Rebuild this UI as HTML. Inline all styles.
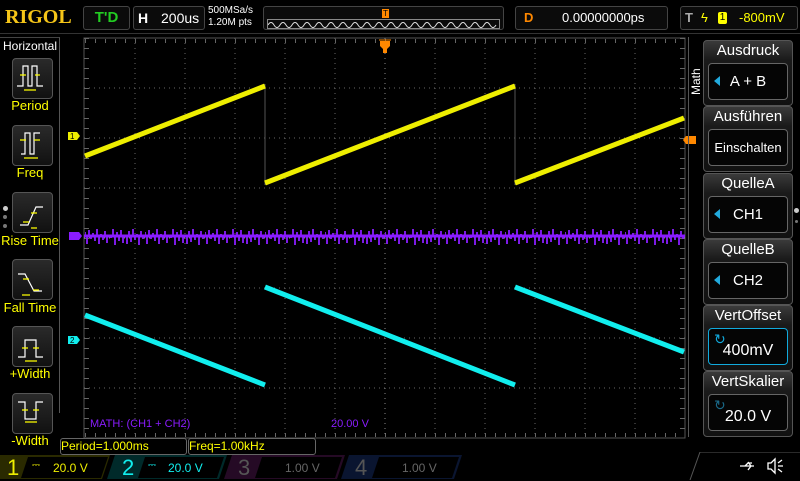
<!DOCTYPE html>
<html><head><meta charset="utf-8"><style>
body{margin:0;background:#000;width:800px;height:480px;overflow:hidden;position:relative;font-family:"Liberation Sans",sans-serif;color:#fff}
.abs{position:absolute}
.box{position:absolute;border:1px solid #444;border-radius:3px;background:#0b0b0b}
.lbtn{position:absolute;left:12px;width:39px;height:39px;border:1px solid #555;border-radius:4px;background:linear-gradient(#2a2a2a,#111)}
.llab{position:absolute;left:0;width:60px;text-align:center;color:#ff0;font-size:13px}
.rb{position:absolute;left:703px;width:88px;height:64px;border:1px solid #555;border-radius:4px;background:linear-gradient(#3a3a3a,#1a1a1a 30%,#111)}
.rb .t{position:absolute;top:1px;left:0;width:100%;text-align:center;font-size:15px;color:#fff}
.rb .v{position:absolute;left:4px;top:22px;width:78px;height:35px;border:1px solid #666;border-radius:4px;background:#050505;text-align:center;font-size:15px;line-height:35px}
.tri{position:absolute;left:5px;top:12px;width:0;height:0;border-top:5px solid transparent;border-bottom:5px solid transparent;border-right:6px solid #2ad}
</style></head><body>
<div class="abs" style="left:5px;top:6px;font-family:'Liberation Serif',serif;font-weight:bold;font-size:20px;color:#f5c518">RIGOL</div>
<div class="box" style="left:83px;top:6px;width:45px;height:22px;color:#2c2;font-weight:bold;font-size:15px;text-align:center;line-height:22px">T'D</div>
<div class="box" style="left:133px;top:6px;width:70px;height:22px;font-size:14px;line-height:22px"><b style="margin-left:4px">H</b><span style="position:absolute;left:27px;top:0">200us</span></div>
<div class="abs" style="left:208px;top:5px;font-size:10px;line-height:12px">500MSa/s<br>1.20M pts</div>
<div class="box" style="left:263px;top:6px;width:239px;height:22px"><div style="position:absolute;left:3px;top:12px;width:231px;height:8px;border:1px solid #888"></div>
<svg class="abs" style="left:4px;top:12px" width="231" height="9"><path d="M0 6 q3 -5 6 0 t6 0 t6 0 t6 0 t6 0 t6 0 t6 0 t6 0 t6 0 t6 0 t6 0 t6 0 t6 0 t6 0 t6 0 t6 0 t6 0 t6 0 t6 0 t6 0 t6 0 t6 0 t6 0 t6 0 t6 0 t6 0 t6 0 t6 0 t6 0 t6 0 t6 0 t6 0 t6 0 t6 0 t6 0 t6 0 t6 0 t6 0" stroke="#ddd" fill="none"/></svg>
<div class="abs" style="left:118px;top:2px;width:7px;height:9px;background:#f80;color:#000;font-size:8px;text-align:center;line-height:9px">T</div></div>
<div class="box" style="left:515px;top:6px;width:151px;height:22px;font-size:13px;line-height:22px"><b style="color:#f80;margin-left:8px">D</b><span style="position:absolute;left:46px">0.00000000ps</span></div>
<div class="box" style="left:680px;top:6px;width:116px;height:22px;font-size:13px;line-height:22px"><b style="color:#aaa;margin-left:4px">T</b><span style="color:#ff0;position:absolute;left:20px">ϟ</span><span style="position:absolute;left:37px;top:5px;width:9px;height:12px;background:#ff0;color:#000;font-size:10px;line-height:12px;text-align:center;border-radius:2px">1</span><span style="color:#ff0;position:absolute;left:58px">-800mV</span></div>
<div class="abs" style="left:0;top:33px;width:800px;height:1px;background:#333"></div>
<div class="abs" style="left:0;top:37px;width:59px;height:375px;border-right:1px solid #555;border-top:1px solid #444"></div>
<div class="abs" style="left:3px;top:39px;font-size:12px">Horizontal</div>
<div class="lbtn" style="top:58px"></div><div class="llab" style="top:98px">Period</div>
<div class="lbtn" style="top:125px"></div><div class="llab" style="top:165px">Freq</div>
<div class="lbtn" style="top:192px"></div><div class="llab" style="top:233px">Rise Time</div>
<div class="lbtn" style="top:259px"></div><div class="llab" style="top:300px">Fall Time</div>
<div class="lbtn" style="top:326px"></div><div class="llab" style="top:366px">+Width</div>
<div class="lbtn" style="top:393px"></div><div class="llab" style="top:433px">-Width</div>
<svg class="abs" style="left:0;top:0" width="60" height="440" stroke="#fff" fill="none" stroke-width="1.2">
<path d="M17 86h6V66h5v20h4V66h5v20h6"/><path d="M20 75h6M35 75h5M24 90h12" stroke="#ff0"/>
<path d="M21 154h4V133h5v21h4V133h6"/><path d="M20 140h6M34 140h6M24 158h14" stroke="#ff0"/>
<path d="M20 225h8l8-18h7"/><path d="M31 213h6M23 222h6M31 228h6" stroke="#ff0"/>
<path d="M18 274h7l9 17h8"/><path d="M23 279h6M33 290h6M22 295h8" stroke="#ff0"/>
<path d="M18 357h7v-17h11v17h7"/><path d="M22 348h6M33 348h6M25 361h12" stroke="#ff0"/>
<path d="M18 402h7v17h11v-17h7"/><path d="M22 410h6M33 410h6M25 422h12" stroke="#ff0"/>
</svg>
<div class="abs" style="left:3px;top:206px;width:5px;height:5px;border-radius:3px;background:#ccc"></div>
<div class="abs" style="left:3px;top:215px;width:4px;height:4px;border-radius:2px;background:#777"></div>
<div class="abs" style="left:3px;top:224px;width:4px;height:4px;border-radius:2px;background:#777"></div>
<svg class="abs" style="left:0;top:0" width="800" height="480">
<defs><pattern id="n" width="60" height="20" patternUnits="userSpaceOnUse" x="85" y="226">
<path d="M0 10V6M2 10v8M4 10V4M6 10v3M8 10V7M10 10v5M12 10V3M14 10v8M16 10V8M18 10v4M20 10V5M22 10v7M24 10V9M26 10v2M28 10V3M30 10v9M32 10V6M34 10v5M36 10V4M38 10v7M40 10V9M42 10v8M44 10V5M46 10v6M48 10V3M50 10v4M52 10V8M54 10v9M56 10V5M58 10v3" stroke="#8a1cff" stroke-width="1.8"/></pattern>
<pattern id="tx" width="10" height="5" patternUnits="userSpaceOnUse" x="85" y="0"><path d="M0.5 0v5" stroke="#666"/></pattern>
<pattern id="ty" width="5" height="10" patternUnits="userSpaceOnUse" x="0" y="38"><path d="M0 0.5h5" stroke="#666"/></pattern></defs>
<rect x="84" y="38" width="601" height="400" fill="none" stroke="#555"/>
<rect x="84" y="39" width="601" height="4" fill="url(#tx)"/><rect x="84" y="433" width="601" height="4" fill="url(#tx)"/>
<rect x="84" y="38" width="5" height="400" fill="url(#ty)"/><rect x="680" y="38" width="5" height="400" fill="url(#ty)"/>
<g stroke="#666" stroke-dasharray="1 4">
<path d="M135 38v400M185 38v400M235 38v400M285 38v400M335 38v400M435 38v400M485 38v400M535 38v400M585 38v400M635 38v400"/>
<path d="M84 88h601M84 138h601M84 188h601M84 288h601M84 338h601M84 388h601"/></g>
<g stroke="#888" stroke-dasharray="1 4"><path d="M385 38v400M84 238h601"/></g>
<rect x="84" y="226" width="601" height="20" fill="url(#n)"/>
<path d="M84 236h601" stroke="#8a1cff" stroke-width="3"/>
<path d="M265 84v101M515 84v101" stroke="#555" stroke-width="1"/>
<path d="M85 156L265 86M265 183L515 86M515 183L684 118" stroke="#ee0" stroke-width="5"/>
<path d="M85 315L265 385M265 287L515 385M515 287L684 352" stroke="#1ee" stroke-width="5"/>
<path d="M68 132h9l3 4-3 4h-9z" fill="#ee0"/><text x="70" y="139" font-size="8" fill="#000">1</text>
<path d="M68 336h9l3 4-3 4h-9z" fill="#1ee"/><text x="70" y="343" font-size="8" fill="#000">2</text>
<path d="M69 232h10l3 4-3 4h-10z" fill="#8a1cff"/>
<path d="M686 136h10v8h-10l-3-4z" fill="#f80"/>
<path d="M380 41h10v5l-3 3v4h-4v-4l-3-3z" fill="#f80"/><path d="M379 40h12" stroke="#f80"/>
</svg>
<div class="abs" style="left:90px;top:418px;font-size:11px;color:#8a1cff">MATH: (CH1 + CH2)</div>
<div class="abs" style="left:331px;top:418px;font-size:11px;color:#8a1cff">20.00 V</div>
<div class="abs" style="left:60px;top:438px;width:125px;height:15px;border:1px solid #666;border-radius:3px;color:#ff0;font-size:12px;line-height:15px">Period=1.000ms</div>
<div class="abs" style="left:188px;top:438px;width:126px;height:15px;border:1px solid #666;border-radius:3px;color:#ff0;font-size:12px;line-height:15px">Freq=1.00kHz</div>
<div class="abs" style="left:688px;top:37px;width:1px;height:400px;background:#555"></div>
<div class="abs" style="font-size:12px;transform:rotate(-90deg);transform-origin:left top;top:95px;left:689px">Math</div>
<div class="rb" style="top:40px"><div class="t">Ausdruck</div><div class="v"><div class="tri"></div>A + B</div></div>
<div class="rb" style="top:106px"><div class="t">Ausführen</div><div class="v" style="font-size:13px">Einschalten</div></div>
<div class="rb" style="top:173px"><div class="t">QuelleA</div><div class="v"><div class="tri"></div>CH1</div></div>
<div class="rb" style="top:239px"><div class="t">QuelleB</div><div class="v"><div class="tri"></div>CH2</div></div>
<div class="rb" style="top:305px"><div class="t">VertOffset</div><div class="v" style="border-color:#1ad;line-height:44px;font-size:16px">400mV<span style="position:absolute;left:5px;top:-12px;color:#1ad;font-size:14px">↻</span></div></div>
<div class="rb" style="top:371px"><div class="t">VertSkalier</div><div class="v" style="line-height:44px;font-size:16px">20.0 V<span style="position:absolute;left:5px;top:-12px;color:#1a6a8a;font-size:14px">↻</span></div></div>
<div class="abs" style="left:794px;top:208px;width:5px;height:5px;border-radius:3px;background:#ccc"></div>
<div class="abs" style="left:795px;top:220px;width:3px;height:3px;border-radius:2px;background:#777"></div>
<svg class="abs" style="left:0;top:452px" width="800" height="28">
<path d="M0 3h110l-8 24H0z" fill="#2a2a00"/><path d="M28 5h80l-7 21H21z" fill="#000"/>
<path d="M115 3h112l-8 24H107z" fill="#002a2a"/><path d="M145 5h79l-7 21H138z" fill="#000"/>
<path d="M232 3h113l-8 24H224z" fill="#250a25"/><path d="M262 5h80l-7 21H255z" fill="#000"/>
<path d="M349 3h113l-8 24H341z" fill="#0a1530"/><path d="M379 5h80l-7 21H372z" fill="#000"/>
<path d="M700 0L690 28M700 0h100" stroke="#555"/>
<g stroke="#fff" fill="none" stroke-width="1.3"><path d="M740 14h14M748 10l3 4-3 4M745 14l3-3h4"/><path d="M768 11h3l4-4v14l-4-4h-3zM778 11l4-3M778 14h5M778 17l4 3"/></g>
</svg>
<div class="abs" style="left:7px;top:455px;font-size:22px;color:#ee0">1</div>
<div class="abs" style="left:32px;top:460px;font-size:10px;color:#ee0">⎓</div>
<div class="abs" style="left:53px;top:461px;font-size:12px;color:#ee0">20.0 V</div>
<div class="abs" style="left:122px;top:455px;font-size:22px;color:#1ee">2</div>
<div class="abs" style="left:148px;top:460px;font-size:10px;color:#1ee">⎓</div>
<div class="abs" style="left:168px;top:461px;font-size:12px;color:#1ee">20.0 V</div>
<div class="abs" style="left:238px;top:455px;font-size:22px;color:#555">3</div>
<div class="abs" style="left:285px;top:461px;font-size:12px;color:#666">1.00 V</div>
<div class="abs" style="left:355px;top:455px;font-size:22px;color:#555">4</div>
<div class="abs" style="left:402px;top:461px;font-size:12px;color:#666">1.00 V</div>
</body></html>
